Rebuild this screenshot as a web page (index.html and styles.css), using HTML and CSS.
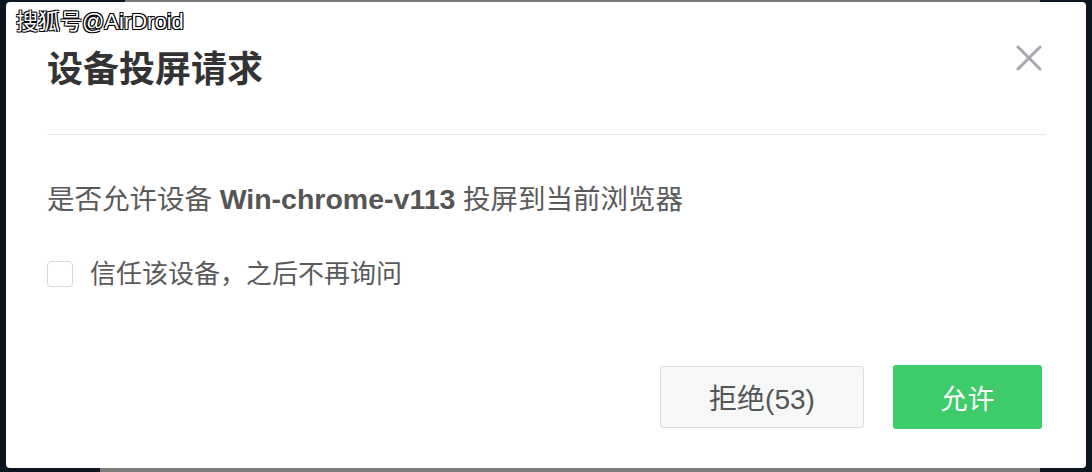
FILE: index.html
```html
<!DOCTYPE html>
<html lang="zh-CN">
<head>
<meta charset="utf-8">
<title>设备投屏请求</title>
<link rel="stylesheet" href="styles.css">
</head>
<body>
<div class="page">
  <div class="strip strip-top"><div class="strip-gray"></div></div>
  <div class="modal">
    <div class="modal-header">
      <h1 class="modal-title">设备投屏请求</h1>
      <button class="close" aria-label="关闭">
        <svg width="26" height="26" viewBox="0 0 26 26"><path d="M2 2 L24 24 M24 2 L2 24" stroke="#a5a8ad" stroke-width="3" stroke-linecap="round" fill="none"/></svg>
      </button>
    </div>
    <p class="message">是否允许设备 <b class="device">Win-chrome-v113</b> 投屏到当前浏览器</p>
    <label class="trust"><span class="checkbox"></span><span>信任该设备，之后不再询问</span></label>
    <div class="actions">
      <button class="btn btn-reject">拒绝(53)</button>
      <button class="btn btn-allow">允许</button>
    </div>
  </div>
  <div class="strip strip-bottom"><div class="strip-gray"></div></div>
  <div class="watermark">搜狐号@AirDroid</div>
</div>
</body>
</html>
```

FILE: styles.css
```css
html, body {
  margin: 0;
  padding: 0;
  background: #0b1620;
}
.page {
  position: relative;
  width: 1092px;
  height: 472px;
  display: flex;
  flex-direction: column;
  overflow: hidden;
  font-family: "Liberation Sans", "Noto Sans CJK SC", sans-serif;
}
.strip {
  display: flex;
}
.strip-top {
  height: 2px;
  padding-left: 125px;
}
.strip-top .strip-gray {
  width: 915px;
  background: #7a7a7a;
}
.strip-bottom {
  height: 4px;
  padding-left: 100px;
}
.strip-bottom .strip-gray {
  width: 940px;
  background: #7c7c7c;
}
.modal {
  height: 466px;
  margin: 0 6px;
  background: #ffffff;
  border-radius: 4px;
  padding: 0 40px 0 41px;
  box-sizing: border-box;
  display: flex;
  flex-direction: column;
}
.modal-header {
  display: flex;
  justify-content: space-between;
  align-items: flex-start;
  padding: 48px 0 44px;
  border-bottom: 1px solid #e6e6e6;
}
.modal-title {
  margin: 0;
  font-size: 36px;
  line-height: 40px;
  font-weight: bold;
  color: #333333;
}
.close {
  margin: -5px 4px 0 0;
  padding: 0;
  border: 0;
  background: none;
  width: 26px;
  height: 26px;
  display: flex;
}
.message {
  margin: 46px 0 0;
  font-size: 27.5px;
  line-height: 36px;
  color: #5a5a5a;
}
.device {
  font-size: 28.5px;
  color: #555555;
}
.trust {
  margin-top: 38px;
  display: flex;
  align-items: center;
  gap: 17px;
  font-size: 26px;
  line-height: 36px;
  color: #5a5a5a;
}
.checkbox {
  width: 24px;
  height: 24px;
  border: 1px solid #d9d9d9;
  border-radius: 4px;
  background: #fff;
}
.actions {
  margin-top: 73px;
  display: flex;
  justify-content: flex-end;
  align-items: center;
  gap: 29px;
  padding-right: 4px;
}
.btn {
  font-family: "Liberation Sans", "Noto Sans CJK SC", sans-serif;
  border-radius: 3px;
  padding: 0;
  display: flex;
  align-items: center;
  justify-content: center;
}
.btn-reject {
  width: 204px;
  height: 62px;
  background: #f6f7f7;
  border: 1px solid #dcdcdc;
  color: #555555;
  font-size: 28px;
}
.btn-allow {
  width: 149px;
  height: 64px;
  background: #3ecb6a;
  border: 0;
  color: #ffffff;
  font-size: 27px;
}
.watermark {
  position: absolute;
  left: 16px;
  top: 9px;
  font-size: 22px;
  line-height: 26px;
  color: #ffffff;
  font-family: "Liberation Sans", "Noto Sans CJK SC", sans-serif;
  text-shadow: -1px -1px 0 #000, 1px -1px 0 #000, -1px 1px 0 #000, 1px 1px 0 #000;
}
```
